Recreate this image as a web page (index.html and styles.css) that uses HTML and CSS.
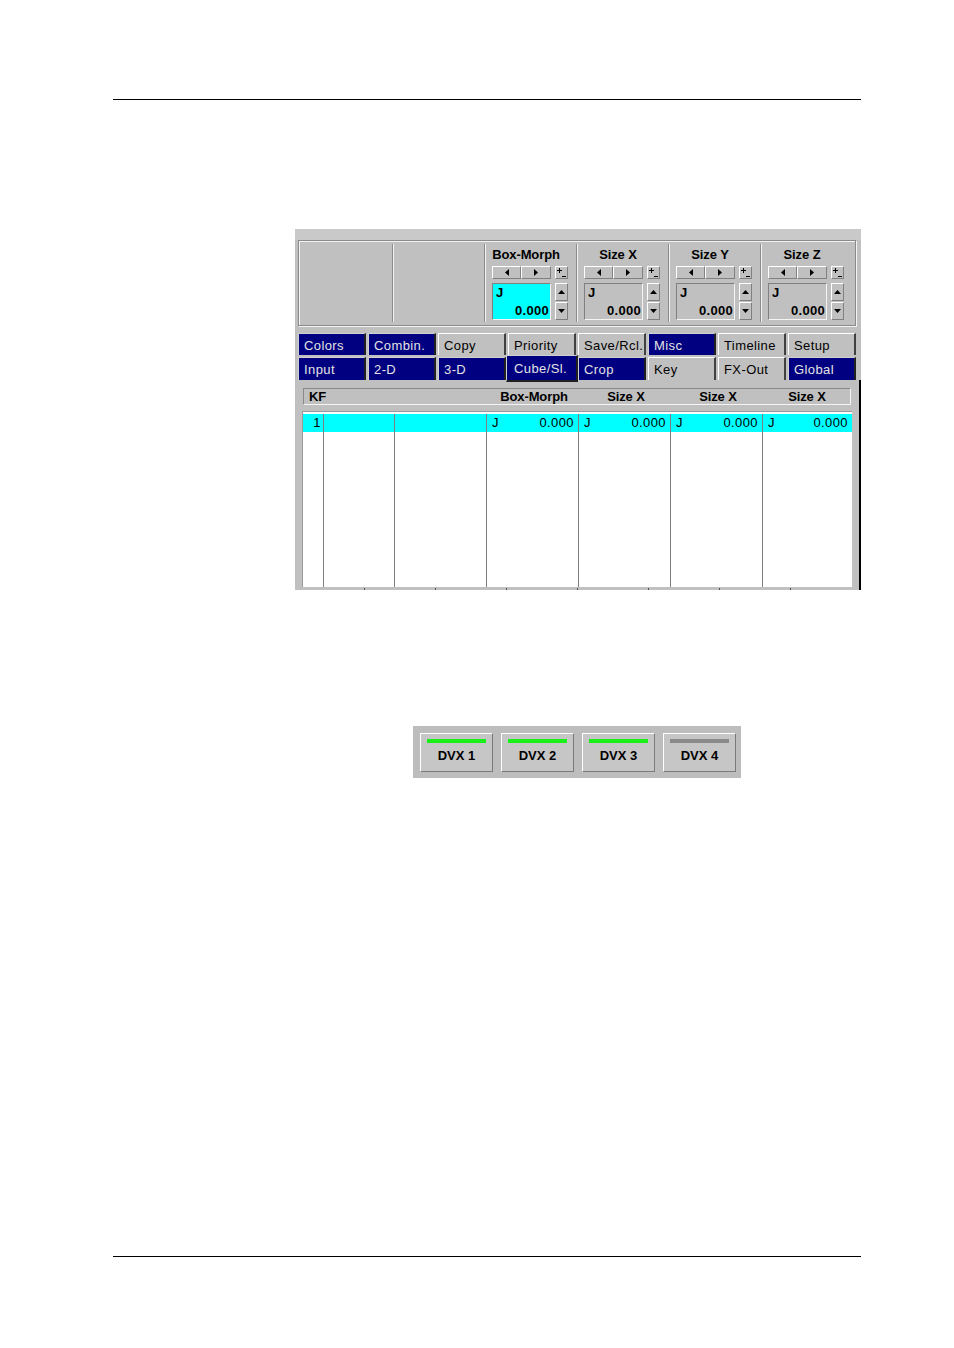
FILE: index.html
```html
<!DOCTYPE html>
<html>
<head>
<meta charset="utf-8">
<title>DVX</title>
<link rel="stylesheet" href="styles.css">
</head>
<body>
<div class="page">
  <div class="rule rule-top"></div>

  <div class="shot">
    <div class="params">
      <div class="sec sec-first"></div>
      <div class="sec"></div>
      <div class="sec ctl">
        <div class="ctl-title">Box-Morph</div>
        <div class="arrows">
          <div class="btn arr arr-l"><svg width="4" height="7" viewBox="0 0 4 7"><polygon points="4,0 0,3.5 4,7"/></svg></div>
          <div class="btn arr arr-r"><svg width="4" height="7" viewBox="0 0 4 7"><polygon points="0,0 4,3.5 0,7"/></svg></div>
          <div class="btn pm"><svg width="11" height="11" viewBox="0 0 11 11"><path d="M1 3.5H6M3.5 1V6M6 9.5H10" stroke="#000" stroke-width="1" fill="none"/></svg></div>
        </div>
        <div class="valrow">
          <div class="val val-active"><span class="val-j">J</span><span class="val-n">0.000</span></div>
          <div class="spin">
            <div class="btn sp"><svg width="7" height="4" viewBox="0 0 7 4"><polygon points="0,4 3.5,0 7,4"/></svg></div>
            <div class="btn sp"><svg width="7" height="4" viewBox="0 0 7 4"><polygon points="0,0 7,0 3.5,4"/></svg></div>
          </div>
        </div>
      </div>
      <div class="sec ctl">
        <div class="ctl-title">Size X</div>
        <div class="arrows">
          <div class="btn arr arr-l"><svg width="4" height="7" viewBox="0 0 4 7"><polygon points="4,0 0,3.5 4,7"/></svg></div>
          <div class="btn arr arr-r"><svg width="4" height="7" viewBox="0 0 4 7"><polygon points="0,0 4,3.5 0,7"/></svg></div>
          <div class="btn pm"><svg width="11" height="11" viewBox="0 0 11 11"><path d="M1 3.5H6M3.5 1V6M6 9.5H10" stroke="#000" stroke-width="1" fill="none"/></svg></div>
        </div>
        <div class="valrow">
          <div class="val"><span class="val-j">J</span><span class="val-n">0.000</span></div>
          <div class="spin">
            <div class="btn sp"><svg width="7" height="4" viewBox="0 0 7 4"><polygon points="0,4 3.5,0 7,4"/></svg></div>
            <div class="btn sp"><svg width="7" height="4" viewBox="0 0 7 4"><polygon points="0,0 7,0 3.5,4"/></svg></div>
          </div>
        </div>
      </div>
      <div class="sec ctl">
        <div class="ctl-title">Size Y</div>
        <div class="arrows">
          <div class="btn arr arr-l"><svg width="4" height="7" viewBox="0 0 4 7"><polygon points="4,0 0,3.5 4,7"/></svg></div>
          <div class="btn arr arr-r"><svg width="4" height="7" viewBox="0 0 4 7"><polygon points="0,0 4,3.5 0,7"/></svg></div>
          <div class="btn pm"><svg width="11" height="11" viewBox="0 0 11 11"><path d="M1 3.5H6M3.5 1V6M6 9.5H10" stroke="#000" stroke-width="1" fill="none"/></svg></div>
        </div>
        <div class="valrow">
          <div class="val"><span class="val-j">J</span><span class="val-n">0.000</span></div>
          <div class="spin">
            <div class="btn sp"><svg width="7" height="4" viewBox="0 0 7 4"><polygon points="0,4 3.5,0 7,4"/></svg></div>
            <div class="btn sp"><svg width="7" height="4" viewBox="0 0 7 4"><polygon points="0,0 7,0 3.5,4"/></svg></div>
          </div>
        </div>
      </div>
      <div class="sec ctl sec-last">
        <div class="ctl-title">Size Z</div>
        <div class="arrows">
          <div class="btn arr arr-l"><svg width="4" height="7" viewBox="0 0 4 7"><polygon points="4,0 0,3.5 4,7"/></svg></div>
          <div class="btn arr arr-r"><svg width="4" height="7" viewBox="0 0 4 7"><polygon points="0,0 4,3.5 0,7"/></svg></div>
          <div class="btn pm"><svg width="11" height="11" viewBox="0 0 11 11"><path d="M1 3.5H6M3.5 1V6M6 9.5H10" stroke="#000" stroke-width="1" fill="none"/></svg></div>
        </div>
        <div class="valrow">
          <div class="val"><span class="val-j">J</span><span class="val-n">0.000</span></div>
          <div class="spin">
            <div class="btn sp"><svg width="7" height="4" viewBox="0 0 7 4"><polygon points="0,4 3.5,0 7,4"/></svg></div>
            <div class="btn sp"><svg width="7" height="4" viewBox="0 0 7 4"><polygon points="0,0 7,0 3.5,4"/></svg></div>
          </div>
        </div>
      </div>
    </div>

    <div class="tabs">
      <div class="tab tab-blue">Colors</div>
      <div class="tab tab-blue">Combin.</div>
      <div class="tab">Copy</div>
      <div class="tab">Priority</div>
      <div class="tab">Save/Rcl.</div>
      <div class="tab tab-blue">Misc</div>
      <div class="tab">Timeline</div>
      <div class="tab">Setup</div>
      <div class="tab tab-blue">Input</div>
      <div class="tab tab-blue">2-D</div>
      <div class="tab tab-blue">3-D</div>
      <div class="tab tab-blue tab-sel">Cube/Sl.</div>
      <div class="tab tab-blue">Crop</div>
      <div class="tab">Key</div>
      <div class="tab">FX-Out</div>
      <div class="tab tab-blue">Global</div>
    </div>

    <div class="pane">
      <div class="thead">
        <div class="th th-kf">KF</div>
        <div class="th"></div>
        <div class="th"></div>
        <div class="th">Box-Morph</div>
        <div class="th">Size X</div>
        <div class="th">Size X</div>
        <div class="th">Size X</div>
      </div>
      <div class="tbody">
        <div class="td td-sel td-kf">1</div>
        <div class="td td-sel"></div>
        <div class="td td-sel"></div>
        <div class="td td-sel td-val"><span>J</span><span>0.000</span></div>
        <div class="td td-sel td-val"><span>J</span><span>0.000</span></div>
        <div class="td td-sel td-val"><span>J</span><span>0.000</span></div>
        <div class="td td-sel td-val td-last"><span>J</span><span>0.000</span></div>
        <div class="td"></div>
        <div class="td"></div>
        <div class="td"></div>
        <div class="td"></div>
        <div class="td"></div>
        <div class="td"></div>
        <div class="td td-last"></div>
      </div>
      <div class="ticks">
        <span class="tick"></span><span class="tick"></span><span class="tick"></span><span class="tick"></span><span class="tick"></span><span class="tick"></span><span class="tick"></span>
      </div>
    </div>
  </div>

  <div class="dvx">
    <div class="dvxbtn"><div class="bar bar-on"></div><div class="dvxlabel">DVX 1</div></div>
    <div class="dvxbtn"><div class="bar bar-on"></div><div class="dvxlabel">DVX 2</div></div>
    <div class="dvxbtn"><div class="bar bar-on"></div><div class="dvxlabel">DVX 3</div></div>
    <div class="dvxbtn"><div class="bar bar-off"></div><div class="dvxlabel">DVX 4</div></div>
  </div>

  <div class="rule rule-bottom"></div>
</div>
</body>
</html>
```

FILE: styles.css
```css
* { box-sizing: border-box; }

body {
  margin: 0;
  background: #fff;
  color: #000;
  font-family: "Liberation Sans", Arial, sans-serif;
}

.page {
  width: 954px;
  height: 1348px;
  overflow: hidden;
}

.rule {
  height: 1px;
  width: 748px;
  margin-left: 113px;
  background: #000;
}
.rule-top { margin-top: 99px; }
.rule-bottom { margin-top: 478px; }

/* ---------- screenshot panel ---------- */
.shot {
  margin-top: 129px;
  margin-left: 295px;
  width: 566px;
  height: 361px;
  background: #c0c0c0;
  padding-top: 11px;
  box-shadow: inset 0 11px 0 #c9c9c9;
}

.params {
  margin-left: 3px;
  width: 558px;
  height: 86px;
  border: 1px solid #8a8a8a;
  box-shadow: inset 1px 1px 0 #f4f4f4, 1px 1px 0 #f4f4f4;
  display: flex;
}

.sec {
  margin: 3px 0;
  width: 92px;
  border-right: 1px solid #8a8a8a;
  box-shadow: 1px 0 0 #f4f4f4;
}
.sec-first { width: 94px; }
.sec-last { flex: 1; border-right: none; box-shadow: none; }

.ctl { padding: 3px 0 0 7px; }

.ctl-title {
  width: 76px;
  padding-right: 8px;
  height: 16px;
  font-size: 13px;
  line-height: 16px;
  font-weight: bold;
  text-align: center;
  letter-spacing: -0.1px;
}

.btn {
  background: #c0c0c0;
  border-top: 1px solid #fff;
  border-left: 1px solid #fff;
  border-right: 1px solid #808080;
  border-bottom: 1px solid #808080;
  display: flex;
  align-items: center;
  justify-content: center;
}
.btn svg { display: block; fill: #000; }

.arrows {
  display: flex;
  margin-top: 3px;
  height: 13px;
}
.arr-l { width: 29px; }
.arr-r { width: 30px; }
.pm { width: 13px; margin-left: 4px; }

.valrow {
  display: flex;
  margin-top: 4px;
  height: 37px;
}

.val {
  width: 59px;
  border-top: 1px solid #808080;
  border-left: 1px solid #808080;
  border-right: 1px solid #f4f4f4;
  border-bottom: 1px solid #f4f4f4;
  display: flex;
  flex-direction: column;
  justify-content: space-between;
  padding: 1px 1px 1px 3px;
  font-size: 13px;
  font-weight: bold;
  line-height: 15px;
}
.val-active { background: #00ffff; }
.val-n { text-align: right; letter-spacing: 0.3px; }

.spin {
  margin-left: 4px;
  width: 13px;
  display: flex;
  flex-direction: column;
  gap: 1px;
}
.sp { height: 18px; }

/* ---------- tabs ---------- */
.tabs {
  position: relative;
  z-index: 1;
  margin: 7px 0 0 3px;
  width: 558px;
  display: grid;
  grid-template-columns: repeat(8, 68px);
  grid-template-rows: 22px 23px;
  column-gap: 2px;
  row-gap: 2px;
}

.tab {
  background: #c0c0c0;
  border-top: 1px solid #fff;
  border-left: 1px solid #fff;
  border-right: 2px solid #404040;
  padding-left: 5px;
  padding-top: 1px;
  font-size: 13px;
  letter-spacing: 0.4px;
  display: flex;
  align-items: center;
  color: #000;
  white-space: nowrap;
}

.tab-blue {
  background: #000080;
  color: #e4e4e4;
  border-top-color: #d0d0d0;
  border-left-color: #d0d0d0;
  border-right-color: #202020;
}

.tab-sel {
  margin: -2px -2px -2px -2px;
  border-bottom: 2px solid #202020;
  padding-left: 7px;
  padding-top: 0;
}

/* ---------- table pane ---------- */
.pane {
  height: 210px;
  border-right: 2px solid #000;
  padding: 8px 0 0 8px;
  background: #c0c0c0;
}

.thead {
  width: 548px;
  height: 17px;
  border-top: 1px solid #8a8a8a;
  border-left: 1px solid #8a8a8a;
  border-right: 1px solid #f4f4f4;
  border-bottom: 1px solid #f4f4f4;
  display: grid;
  grid-template-columns: 21px 71px 92px 92px 92px 92px 1fr;
  font-size: 13px;
  font-weight: bold;
  line-height: 15px;
  letter-spacing: -0.1px;
}
.th { text-align: center; white-space: nowrap; }
.th-kf { text-align: left; padding-left: 5px; }

.tbody {
  margin-top: 6px;
  margin-left: -1px;
  width: 550px;
  height: 176px;
  background: #fff;
  border-top: 1px solid #9a9a9a;
  border-left: 1px solid #9a9a9a;
  padding-top: 2px;
  display: grid;
  grid-template-columns: 21px 71px 92px 92px 92px 92px 1fr;
  grid-template-rows: 18px 1fr;
  font-size: 13px;
  letter-spacing: 0.4px;
  line-height: 18px;
}

.td { border-right: 1px solid #808080; }
.td-last { border-right: none; }
.td-sel { background: #00ffff; }
.td-kf { text-align: right; padding-right: 2px; }
.td-val {
  display: flex;
  justify-content: space-between;
  padding: 0 4px 0 5px;
}

.ticks {
  margin-left: -8px;
  height: 3px;
  padding-left: 69px;
  display: flex;
  gap: 70px;
}
.tick {
  width: 1px;
  height: 2px;
  margin-top: 1px;
  background: #505050;
}

/* ---------- DVX buttons ---------- */
.dvx {
  margin-top: 136px;
  margin-left: 413px;
  width: 328px;
  height: 52px;
  background: #bdbdbd;
  padding: 7px 0 0 7px;
  display: flex;
  gap: 8px;
}

.dvxbtn {
  width: 73px;
  height: 39px;
  background: #c6c6c6;
  border-top: 1px solid #fff;
  border-left: 1px solid #fff;
  border-right: 1px solid #7a7a7a;
  border-bottom: 1px solid #7a7a7a;
  padding: 5px 6px 0 6px;
}

.bar { height: 4px; }
.bar-on { background: #19f019; }
.bar-off { background: #8a8a8a; }

.dvxlabel {
  margin-top: 5px;
  font-size: 13px;
  line-height: 16px;
  font-weight: bold;
  text-align: center;
  letter-spacing: 0;
}
```
